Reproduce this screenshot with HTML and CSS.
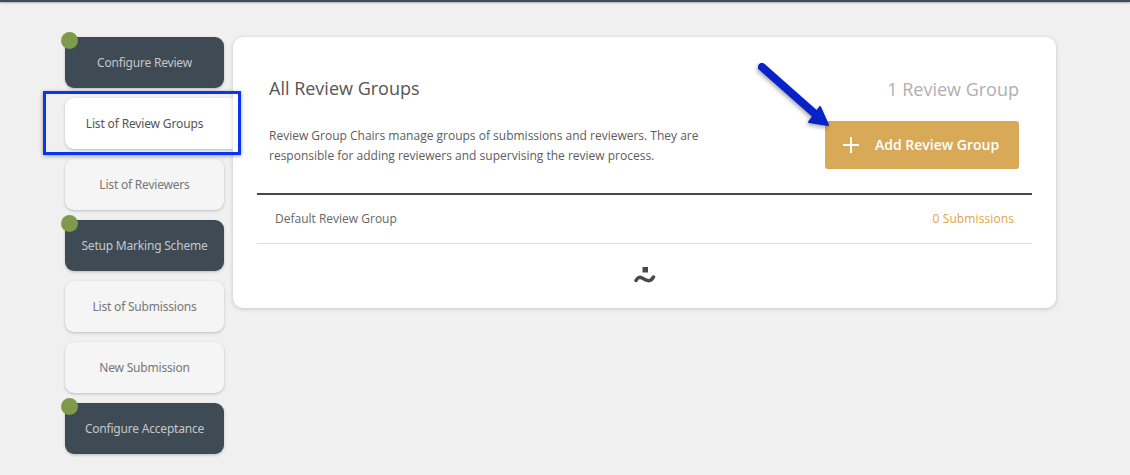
FILE: index.html
```html
<!DOCTYPE html>
<html lang="en">
<head>
    <meta charset="UTF-8">
    <title>All Review Groups</title>
    <link rel="stylesheet" href="styles.css">
</head>
<body>
    <div class="top-line"></div>

    <div class="page">
        <nav class="steps">
            <a class="step dark"><span class="dot"></span>Configure Review</a>
            <a class="step current">List of Review Groups</a>
            <a class="step">List of Reviewers</a>
            <a class="step dark"><span class="dot"></span>Setup Marking Scheme</a>
            <a class="step">List of Submissions</a>
            <a class="step">New Submission</a>
            <a class="step dark"><span class="dot"></span>Configure Acceptance</a>
        </nav>

        <main class="card">
            <div class="card-head">
                <div class="card-intro">
                    <h1>All Review Groups</h1>
                    <p>Review Group Chairs manage groups of submissions and reviewers. They are responsible for adding reviewers and supervising the review process.</p>
                </div>
                <div class="card-actions">
                    <div class="count">1 Review Group</div>
                    <button class="add-btn">
                        <svg width="16" height="16" viewBox="0 0 16 16"><path d="M8 0v16M0 8h16" stroke="#fff" stroke-width="2"/></svg>
                        <span>Add Review Group</span>
                    </button>
                </div>
            </div>

            <div class="group-list">
                <div class="group-row">
                    <span>Default Review Group</span>
                    <span class="subs">0 Submissions</span>
                </div>
            </div>

            <div class="card-foot">
                <svg width="22" height="18" viewBox="0 0 22 18">
                    <rect x="8.500" y="0" width="5.500" height="5.500" fill="#4a4a4a"/>
                    <path d="M2 13.500c1.500-3 3.500-4 6-2.500s5.500 3.500 8 2.500c1.500-.6 2.500-1.800 3.500-3.500" fill="none" stroke="#4a4a4a" stroke-width="3.500" stroke-linecap="round"/>
                </svg>
            </div>
        </main>
    </div>

    <!-- annotation drawn on top of the screenshot -->
    <div class="highlight"></div>
    <svg class="arrow" width="90" height="80" viewBox="0 0 90 80">
        <path d="M10 9L62 55" stroke="#0722c8" stroke-width="8" stroke-linecap="round"/>
        <path d="M68 49L76 67L57 64Z" fill="#0722c8" stroke="#0722c8" stroke-width="2" stroke-linejoin="round"/>
    </svg>
</body>
</html>
```

FILE: styles.css
```css
body {
    margin: 0;
    background-color: #f0f0f0;
    font-family: 'Open Sans', sans-serif;
    color: #4a4a4a;
    height: 475px;
    overflow: hidden;
}

.top-line {
    height: 2px;
    background: #3e4a54;
    box-shadow: 0 1px 2px rgba(0, 0, 0, 0.3);
}

.page {
    display: flex;
    align-items: flex-start;
    gap: 9px;
    padding: 35px 0 0 65px;
}

/* Left column */
.steps {
    display: flex;
    flex-direction: column;
    gap: 10px;
    width: 159px;
}

.step {
    position: relative;
    display: flex;
    align-items: center;
    justify-content: center;
    box-sizing: border-box;
    height: 51px;
    border-radius: 9px;
    background: #f5f5f5;
    color: #777;
    font-family: 'Noto Sans', sans-serif;
    font-size: 12px;
    letter-spacing: -0.2px;
    box-shadow: 0 1px 3px rgba(0, 0, 0, 0.22);
}

.step.dark {
    background: #3e4a54;
    color: #c4c8cb;
}

/* the open step runs into the card */
.step.current {
    width: 168px;
    padding-right: 9px;
    border-radius: 9px 0 0 9px;
    background: #fff;
    color: #555;
    letter-spacing: -0.15px;
}

.dot {
    position: absolute;
    top: -5px;
    left: -4px;
    width: 17px;
    height: 17px;
    border-radius: 50%;
    background: #7f9a4a;
}

/* Main card */
.card {
    position: relative;
    width: 823px;
    height: 271px;
    background: #fff;
    border-radius: 10px;
    box-shadow: 0 1px 4px rgba(0, 0, 0, 0.18);
}

.card-head {
    display: flex;
    justify-content: space-between;
    height: 156px;
    padding: 0 37px 0 36px;
}

h1 {
    margin: 37px 0 0;
    font-size: 18px;
    font-weight: 400;
    line-height: 28px;
    color: #555;
}

.card-intro p {
    margin: 24px 0 0;
    width: 440px;
    font-size: 12px;
    line-height: 20px;
    color: #5c5c5c;
}

.card-actions {
    display: flex;
    flex-direction: column;
    align-items: flex-end;
}

.count {
    margin-top: 38px;
    font-size: 18px;
    line-height: 28px;
    color: #b0b0b0;
}

.add-btn {
    display: flex;
    align-items: center;
    gap: 16px;
    width: 194px;
    height: 48px;
    margin-top: 18px;
    padding: 0 0 1px 18px;
    border: none;
    border-radius: 3px;
    background: #d8a957;
    color: #fff;
    font-family: 'Open Sans', sans-serif;
    font-size: 14px;
    font-weight: 600;
}

/* Group list */
.group-list {
    margin: 0 24px;
    border-top: 2px solid #3e4a54;
}

.group-row {
    display: flex;
    justify-content: space-between;
    align-items: center;
    box-sizing: border-box;
    height: 49px;
    padding: 0 18px 2px;
    border-bottom: 1px solid #ddd;
    font-size: 12px;
    color: #666;
}

.subs {
    color: #dca544;
    font-weight: 500;
    letter-spacing: 0.1px;
}

.card-foot {
    display: flex;
    justify-content: center;
    padding-top: 23px;
}

/* Annotation */
.highlight {
    position: absolute;
    left: 43px;
    top: 91px;
    width: 192px;
    height: 58px;
    border: 3px solid #0a35f0;
    box-shadow: 0 1px 4px rgba(0, 0, 0, 0.35);
}

.arrow {
    position: absolute;
    left: 752px;
    top: 58px;
    filter: drop-shadow(-1px 2px 2px rgba(0, 0, 0, 0.35));
}
```
